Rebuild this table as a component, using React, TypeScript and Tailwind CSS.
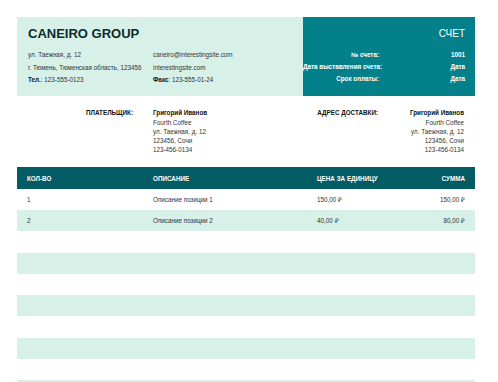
const rows = [
  { qty: "1", desc: "Описание позиции 1", price: "150,00 ₽", sum: "150,00 ₽" },
  { qty: "2", desc: "Описание позиции 2", price: "40,00 ₽", sum: "80,00 ₽" },
  { qty: "", desc: "", price: "", sum: "" },
  { qty: "", desc: "", price: "", sum: "" },
  { qty: "", desc: "", price: "", sum: "" },
  { qty: "", desc: "", price: "", sum: "" },
  { qty: "", desc: "", price: "", sum: "" },
  { qty: "", desc: "", price: "", sum: "" },
  { qty: "", desc: "", price: "", sum: "" },
  { qty: "", desc: "", price: "", sum: "" },
];

const Address = ({ right = false }: { right?: boolean }) => (
  <div className={`leading-[9.25px] ${right ? "text-right" : ""}`}>
    <div className="font-bold text-[#111]">Григорий Иванов</div>
    <div>Fourth Coffee</div>
    <div>ул. Таежная, д. 12</div>
    <div>123456, Сочи</div>
    <div>123-456-0134</div>
  </div>
);

export default function App() {
  return (
    <div className="w-[498px] h-[382px] overflow-hidden bg-white font-['Liberation_Sans',Arial,sans-serif] text-[6.3px] leading-[9px] text-[#333]">
      <div className="ml-[17px] w-[458px] pt-[17px] flex flex-col">
        {/* Header */}
        <div className="flex h-[79px] shrink-0">
          <div className="w-[286px] bg-[#d7f1e9] pl-[11px] pt-[8.6px]">
            <div className="text-[13px] leading-[15px] font-bold text-[#0e2a2c]">CANEIRO GROUP</div>
            <div className="flex mt-[8.5px] leading-[12.5px]">
              <div className="w-[125px]">
                <div>ул. Таежная, д. 12</div>
                <div>г. Тюмень, Тюменская область, 123456</div>
                <div><span className="font-bold text-[#111]">Тел.</span>: 123-555-0123</div>
              </div>
              <div>
                <div>caneiro@interestingsite.com</div>
                <div>interestingsite.com</div>
                <div><span className="font-bold text-[#111]">Факс</span>: 123-555-01-24</div>
              </div>
            </div>
          </div>
          <div className="flex-1 bg-[#03808a] text-white pt-[10.5px] pr-[10px]">
            <div className="text-right text-[10px] leading-[12px]">СЧЕТ</div>
            <div className="mt-[9.5px] grid grid-cols-[76px_1fr] leading-[12px] font-bold">
              <div className="text-right whitespace-nowrap">№ счета:</div>
              <div className="text-right">1001</div>
              <div className="text-right whitespace-nowrap">Дата выставления счета:</div>
              <div className="text-right">Дата</div>
              <div className="text-right whitespace-nowrap">Срок оплаты:</div>
              <div className="text-right">Дата</div>
            </div>
          </div>
        </div>

        {/* Billing */}
        <div className="flex h-[71px] shrink-0 pt-[12.4px] overflow-hidden">
          <div className="w-[116px] text-right font-bold text-[#111] leading-[9.25px]">ПЛАТЕЛЬЩИК:</div>
          <div className="ml-[20px] flex-1">
            <Address />
          </div>
          <div className="w-[120px] text-right font-bold text-[#111] leading-[9.25px]">АДРЕС ДОСТАВКИ:</div>
          <div className="w-[97px] pr-[11px]">
            <Address right />
          </div>
        </div>

        {/* Table */}
        <div className="flex h-[22px] shrink-0 items-center bg-[#035b63] text-white font-bold">
          <div className="w-[136px] pl-[10px]">КОЛ-ВО</div>
          <div className="w-[164px]">ОПИСАНИЕ</div>
          <div className="flex-1">ЦЕНА ЗА ЕДИНИЦУ</div>
          <div className="w-[80px] text-right pr-[10px]">СУММА</div>
        </div>
        {rows.map((r, i) => (
          <div
            key={i}
            className={`flex h-[21.22px] shrink-0 items-center ${i % 2 === 1 ? "bg-[#d7f1e9]" : "bg-white"}`}
          >
            <div className="w-[136px] pl-[10px]">{r.qty}</div>
            <div className="w-[164px]">{r.desc}</div>
            <div className="flex-1">{r.price}</div>
            <div className="w-[80px] text-right pr-[10px]">{r.sum}</div>
          </div>
        ))}
      </div>
    </div>
  );
}
